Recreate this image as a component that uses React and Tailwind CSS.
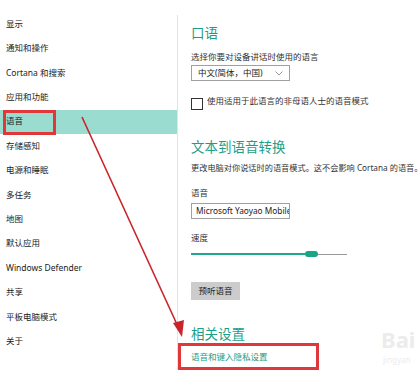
import React from 'react';

const NAV = [
  '显示', '通知和操作', 'Cortana 和搜索', '应用和功能', '语音', '存储感知',
  '电源和睡眠', '多任务', '地图', '默认应用', 'Windows Defender', '共享', '平板电脑模式', '关于'
];

const FONT = { fontFamily: '"Noto Sans", "Noto Sans CJK SC", sans-serif' };

function NavItem({ label, active }) {
  return (
    <div className={`relative h-[24.4px] flex items-center px-[6px] text-[8.5px] text-[#222] ${active ? 'bg-[#9adcd0]' : ''}`}>
      {label}
      {active && (
        <div className="absolute left-[3px] top-0 w-[53px] h-[25px] border-[3px] border-[#e0383a]" />
      )}
    </div>
  );
}

function Heading({ children, className = '' }) {
  return <div className={`text-[13.5px] leading-[20px] text-[#1c9f88] ${className}`}>{children}</div>;
}

export default function App() {
  return (
    <div className="relative w-[420px] h-[381px] bg-white overflow-hidden flex" style={FONT}>
      {/* ── Left nav ── */}
      <div className="w-[177px] shrink-0 pt-[12px]">
        {NAV.map(n => (
          <NavItem key={n} label={n} active={n === '语音'} />
        ))}
      </div>

      {/* ── Right pane ── */}
      <div className="mt-[15px] h-[355px] border-l border-[#e3e3e3] pl-[13px] flex-1 min-w-0 text-[8.5px] text-[#333]">
        <Heading className="mt-[8px]">口语</Heading>
        <div className="mt-[7px] leading-[14px] whitespace-nowrap">选择你要对设备讲话时使用的语言</div>
        <div className="mt-[1px] w-[99px] h-[16px] border border-[#a0a0a0] flex items-center justify-between pl-[6px] pr-[6px] text-[#222]">
          <span>中文(简体，中国)</span>
          <svg width="8" height="5" viewBox="0 0 8 5" fill="none" stroke="#999" strokeWidth="1"><path d="M0.5 0.5 L4 4 L7.5 0.5" /></svg>
        </div>
        <div className="mt-[17px] flex items-start gap-[4px]">
          <div className="w-[12px] h-[12px] border-[1.5px] border-[#333] shrink-0" />
          <span className="leading-[12px] mt-[-3px] whitespace-nowrap">使用适用于此语言的非母语人士的语音模式</span>
        </div>

        <Heading className="mt-[27px]">文本到语音转换</Heading>
        <div className="mt-[4px] leading-[14px] text-[8.2px] whitespace-nowrap">更改电脑对你说话时的语音模式。这不会影响 Cortana 的语音。</div>
        <div className="mt-[11px] leading-[14px]">语音</div>
        <div className="mt-[3px] w-[99px] h-[16px] border border-[#a0a0a0] flex items-center pl-[4px] text-[8.3px] text-[#222] whitespace-nowrap overflow-hidden">
          Microsoft Yaoyao Mobile
        </div>
        <div className="mt-[12px] leading-[14px]">速度</div>
        <div className="mt-[5px] w-[156px] h-[8px] flex items-center">
          <div className="w-[114px] h-[1.5px] bg-[#1fa88c]" />
          <div className="w-[13px] h-[6px] rounded-[3px] bg-[#18a585]" />
          <div className="flex-1 h-[1px] bg-[#999]" />
        </div>
        <div className="mt-[24px] w-[49px] h-[18px] bg-[#cccccc] flex items-center justify-center text-[#222]">预听语音</div>

        <Heading className="mt-[24px]">相关设置</Heading>
        <div className="mt-[6px] leading-[14px] text-[#1a9c84] whitespace-nowrap">语音和键入隐私设置</div>
      </div>

      {/* ── Annotations ── */}
      <div className="absolute left-[178px] top-[343px] w-[141px] h-[27px] border-[3px] border-[#e0383a]" />
      <svg className="absolute left-0 top-0" width="420" height="381" viewBox="0 0 420 381">
        <line x1="82" y1="117" x2="180" y2="331" stroke="#c9242a" strokeWidth="1.6" />
        <polygon points="182,337 173,323 184,320" fill="#c9242a" />
      </svg>
      <div className="absolute left-[381px] top-[327px] text-[22px] leading-[24px] text-[#ececec] font-bold whitespace-nowrap">Bai</div>
      <div className="absolute left-[383px] top-[355px] text-[8px] leading-[10px] text-[#ececec] whitespace-nowrap">jingyan</div>
    </div>
  );
}
